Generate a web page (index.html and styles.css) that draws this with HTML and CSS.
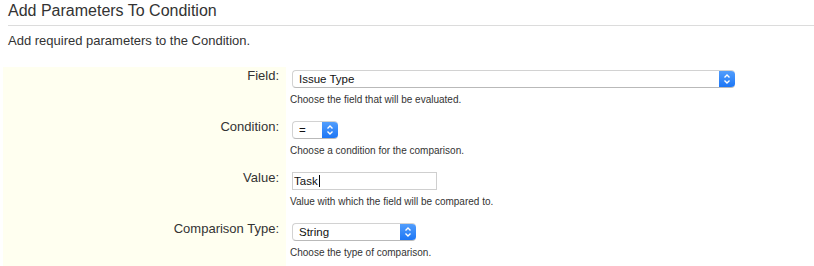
FILE: index.html
```html
<!DOCTYPE html>
<html lang="en">

<head>
    <meta charset="utf-8">
    <title>Add Parameters To Condition</title>
    <link rel="stylesheet" href="styles.css">
</head>

<body>
    <h2 class="page-title">Add Parameters To Condition</h2>
    <p class="intro">Add required parameters to the Condition.</p>

    <div class="param-form">
        <div class="form-row">
            <label class="field-label">Field:</label>
            <div class="field-area">
                <span class="select select-field">
                    <select><option>Issue Type</option></select>
                    <span class="select-btn">
                        <svg width="16" height="16" viewBox="0 0 16 16"><path d="M5.5 6.5 L8 4 L10.5 6.5 M5.5 9.5 L8 12 L10.5 9.5" fill="none" stroke="#fff" stroke-width="1.4"/></svg>
                    </span>
                </span>
                <div class="description">Choose the field that will be evaluated.</div>
            </div>
        </div>

        <div class="form-row">
            <label class="field-label">Condition:</label>
            <div class="field-area">
                <span class="select select-condition">
                    <select><option>=</option></select>
                    <span class="select-btn">
                        <svg width="16" height="16" viewBox="0 0 16 16"><path d="M5.5 6.5 L8 4 L10.5 6.5 M5.5 9.5 L8 12 L10.5 9.5" fill="none" stroke="#fff" stroke-width="1.4"/></svg>
                    </span>
                </span>
                <div class="description">Choose a condition for the comparison.</div>
            </div>
        </div>

        <div class="form-row">
            <label class="field-label">Value:</label>
            <div class="field-area">
                <span class="text-wrap">
                    <input type="text" class="text-input" value="Task">
                    <span class="caret"></span>
                </span>
                <div class="description">Value with which the field will be compared to.</div>
            </div>
        </div>

        <div class="form-row">
            <label class="field-label">Comparison Type:</label>
            <div class="field-area">
                <span class="select select-type">
                    <select><option>String</option></select>
                    <span class="select-btn">
                        <svg width="16" height="16" viewBox="0 0 16 16"><path d="M5.5 6.5 L8 4 L10.5 6.5 M5.5 9.5 L8 12 L10.5 9.5" fill="none" stroke="#fff" stroke-width="1.4"/></svg>
                    </span>
                </span>
                <div class="description">Choose the type of comparison.</div>
            </div>
        </div>
    </div>
</body>

</html>
```

FILE: styles.css
```css
body {
    margin: 0;
    font-family: "Liberation Sans", Arial, sans-serif;
    color: #333;
    background-color: #fff;
}

.page-title {
    margin: 0 0 0 8px;
    padding: 1px 0 4px 0;
    font-size: 16px;
    font-weight: normal;
    line-height: 20px;
    border-bottom: 1px solid #dcdcdc;
}

.intro {
    margin: 7px 0 0 8px;
    font-size: 13px;
    line-height: 16px;
}

.param-form {
    margin: 18px 0 0 3px;
}

.form-row {
    display: grid;
    grid-template-columns: 283px 1fr;
}

.field-label {
    background-color: #fffff0;
    text-align: right;
    padding-top: 1px;
    padding-right: 7px;
    font-size: 13px;
    line-height: 16px;
}

.field-area {
    padding: 3px 0 12px 4px;
}

.select {
    display: flex;
    box-sizing: border-box;
    height: 18px;
    margin-left: 2px;
    border: 1px solid #d2d2d2;
    border-bottom-color: #b9b9b9;
    border-right: none;
    border-radius: 4px;
    background-color: #fff;
    overflow: hidden;
}

.select select {
    flex: 1;
    min-width: 0;
    appearance: none;
    -webkit-appearance: none;
    border: none;
    background: transparent;
    font-family: "Liberation Sans", Arial, sans-serif;
    font-size: 11.5px;
    color: #111;
    padding: 0 0 0 6px;
    height: 16px;
    line-height: 16px;
    outline: none;
}

.select-btn {
    width: 16px;
    margin-top: -1px;
    height: 18px;
    display: flex;
    align-items: center;
    justify-content: center;
    background: linear-gradient(#55a0fd, #1a74f5);
    border-radius: 0 4px 4px 0;
}

.select-field {
    width: 443px;
}

.select-condition {
    width: 46px;
}

.select-type {
    width: 124px;
}

.text-wrap {
    display: block;
    position: relative;
    width: 145px;
    margin-left: 2px;
}

.text-input {
    box-sizing: border-box;
    display: block;
    width: 145px;
    height: 18px;
    margin: 0;
    padding: 0 1px;
    border: 1px solid #cfcfcf;
    font-family: "Liberation Sans", Arial, sans-serif;
    font-size: 11.5px;
    color: #111;
    outline: none;
}

.caret {
    position: absolute;
    left: 27px;
    top: 3px;
    width: 1px;
    height: 12px;
    background-color: #000;
}

.description {
    margin-top: 6px;
    font-size: 10px;
    line-height: 12px;
    color: #333;
}
```
